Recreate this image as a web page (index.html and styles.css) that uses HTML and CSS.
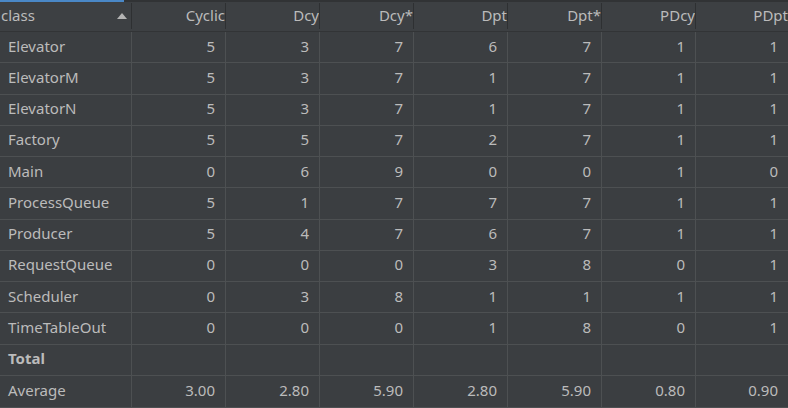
FILE: index.html
```html
<!DOCTYPE html>
<html>
<head>
<meta charset="utf-8">
<link rel="stylesheet" href="styles.css">
</head>
<body>
<div class="table">
  <div class="topbar"><div class="sorted-tab"></div></div>
  <div class="head">
    <div class="hc first">class<span class="arrow"></span></div>
    <div class="hc">Cyclic</div>
    <div class="hc">Dcy</div>
    <div class="hc">Dcy*</div>
    <div class="hc">Dpt</div>
    <div class="hc">Dpt*</div>
    <div class="hc">PDcy</div>
    <div class="hc last">PDpt</div>
  </div>
  <div class="body">
    <div class="c name">Elevator</div><div class="c">5</div><div class="c">3</div><div class="c">7</div><div class="c">6</div><div class="c">7</div><div class="c">1</div><div class="c">1</div>
    <div class="c name">ElevatorM</div><div class="c">5</div><div class="c">3</div><div class="c">7</div><div class="c">1</div><div class="c">7</div><div class="c">1</div><div class="c">1</div>
    <div class="c name">ElevatorN</div><div class="c">5</div><div class="c">3</div><div class="c">7</div><div class="c">1</div><div class="c">7</div><div class="c">1</div><div class="c">1</div>
    <div class="c name">Factory</div><div class="c">5</div><div class="c">5</div><div class="c">7</div><div class="c">2</div><div class="c">7</div><div class="c">1</div><div class="c">1</div>
    <div class="c name">Main</div><div class="c">0</div><div class="c">6</div><div class="c">9</div><div class="c">0</div><div class="c">0</div><div class="c">1</div><div class="c">0</div>
    <div class="c name">ProcessQueue</div><div class="c">5</div><div class="c">1</div><div class="c">7</div><div class="c">7</div><div class="c">7</div><div class="c">1</div><div class="c">1</div>
    <div class="c name">Producer</div><div class="c">5</div><div class="c">4</div><div class="c">7</div><div class="c">6</div><div class="c">7</div><div class="c">1</div><div class="c">1</div>
    <div class="c name">RequestQueue</div><div class="c">0</div><div class="c">0</div><div class="c">0</div><div class="c">3</div><div class="c">8</div><div class="c">0</div><div class="c">1</div>
    <div class="c name">Scheduler</div><div class="c">0</div><div class="c">3</div><div class="c">8</div><div class="c">1</div><div class="c">1</div><div class="c">1</div><div class="c">1</div>
    <div class="c name">TimeTableOut</div><div class="c">0</div><div class="c">0</div><div class="c">0</div><div class="c">1</div><div class="c">8</div><div class="c">0</div><div class="c">1</div>
    <div class="c name bold">Total</div><div class="c"></div><div class="c"></div><div class="c"></div><div class="c"></div><div class="c"></div><div class="c"></div><div class="c"></div>
  </div>
  <div class="body avg">
    <div class="c name">Average</div><div class="c">3.00</div><div class="c">2.80</div><div class="c">5.90</div><div class="c">2.80</div><div class="c">5.90</div><div class="c">0.80</div><div class="c">0.90</div>
  </div>
</div>
</body>
</html>
```
FILE: styles.css
```css
html, body {
  margin: 0;
  padding: 0;
  background: #3b3e41;
}
.table {
  width: 788px;
  height: 408px;
  overflow: hidden;
  font-family: "Noto Sans", "Open Sans", sans-serif;
  font-size: 15px;
  color: #bbbbbb;
  background: #3b3e41;
}
.topbar {
  height: 2px;
  background: #313335;
}
.sorted-tab {
  width: 124px;
  height: 2px;
  background: #4a88c7;
}
.head {
  display: grid;
  grid-template-columns: 131px repeat(6, 93px) 1fr;
  column-gap: 1px;
  height: 29px;
  background: #3d4043;
  border-bottom: 1px solid #323436;
}
.hc {
  display: flex;
  align-items: center;
  justify-content: flex-end;
  padding: 0 0 3px 0;
  line-height: 1;
  position: relative;
}
.hc::after {
  content: "";
  position: absolute;
  right: -1px;
  top: 1px;
  bottom: 2px;
  width: 1px;
  background: #2e3032;
}
.hc.last::after {
  display: none;
}
.hc.first {
  justify-content: space-between;
  padding-left: 1px;
  padding-right: 4px;
}
.arrow {
  width: 0;
  height: 0;
  border-left: 5px solid transparent;
  border-right: 5px solid transparent;
  border-bottom: 6px solid #b4b4b4;
  margin-top: 2px;
}
.body {
  display: grid;
  grid-template-columns: 131px repeat(6, 93px) 1fr;
  grid-auto-rows: 30.25px;
  gap: 1px;
  background: #4d5052;
}
.body.avg {
  border-top: 1px solid #4d5052;
  grid-auto-rows: 31px;
  border-bottom: 1px solid #4d5052;
}
.c {
  background: #3b3e41;
  display: flex;
  align-items: center;
  justify-content: flex-end;
  padding-right: 10px;
  padding-bottom: 2px;
  line-height: 1;
}
.c.name {
  justify-content: flex-start;
  padding-left: 8px;
  padding-right: 0;
}
.c.bold {
  font-weight: 700;
}
```
